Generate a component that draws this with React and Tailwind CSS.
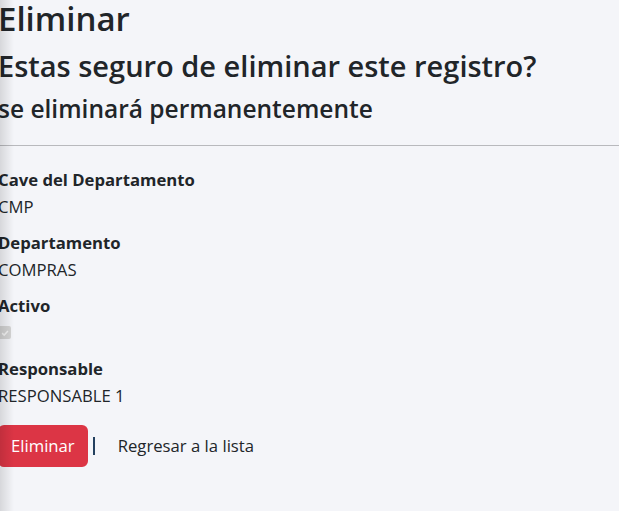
import React from 'react'

const fields = [
  { label: 'Cave del Departamento', value: 'CMP' },
  { label: 'Departamento', value: 'COMPRAS' },
  { label: 'Activo', checkbox: true },
  { label: 'Responsable', value: 'RESPONSABLE 1' },
]

function Field({ label, value, checkbox }) {
  return (
    <div className="mb-[9px]">
      <dt className="font-bold leading-[27px]">{label}</dt>
      <dd className="leading-[27px] h-[27px] flex items-center">
        {checkbox ? (
          <span className="w-[13px] h-[13px] rounded-[2px] bg-[#d4d4d4] flex items-center justify-center">
            <svg viewBox="0 0 12 12" className="w-[10px] h-[10px]">
              <path d="M2.5 6.2 L5 8.5 L9.5 3.5" fill="none" stroke="#f4f4f4" strokeWidth="1.8" />
            </svg>
          </span>
        ) : (
          value
        )}
      </dd>
    </div>
  )
}

export default function App() {
  return (
    <div className="relative min-h-[511px] w-full bg-[#f4f5f9] text-[#212529] overflow-hidden font-['Open_Sans',sans-serif]">
      <div className="-ml-[2px]">
        <h1 className="text-[33px] font-semibold leading-[38px]">Eliminar</h1>
        <h2 className="text-[29px] font-semibold leading-[36px] mt-[10px]">
          Estas seguro de eliminar este registro?
        </h2>
        <h3 className="text-[24.5px] font-semibold leading-[32px] mt-[9px]">se eliminará permanentemente</h3>
        <hr className="mt-[20px] mb-[20px] border-0 h-px bg-[#b8b9bd]" />
        <dl className="text-[16.7px]">
          {fields.map((f) => (
            <Field key={f.label} {...f} />
          ))}
        </dl>
        <div className="flex items-center mt-[16px] text-[16.7px]">
          <button className="h-[42px] px-[13px] bg-[#dc3545] text-white rounded-[6px]">Eliminar</button>
          <span className="ml-[5px] w-[2px] h-[18px] bg-[#23405f]" />
          <a className="ml-[23px]">Regresar a la lista</a>
        </div>
      </div>
      <div className="absolute inset-y-0 left-0 w-[14px] pointer-events-none bg-gradient-to-r from-[rgba(0,0,0,0.12)] to-transparent" />
    </div>
  )
}
